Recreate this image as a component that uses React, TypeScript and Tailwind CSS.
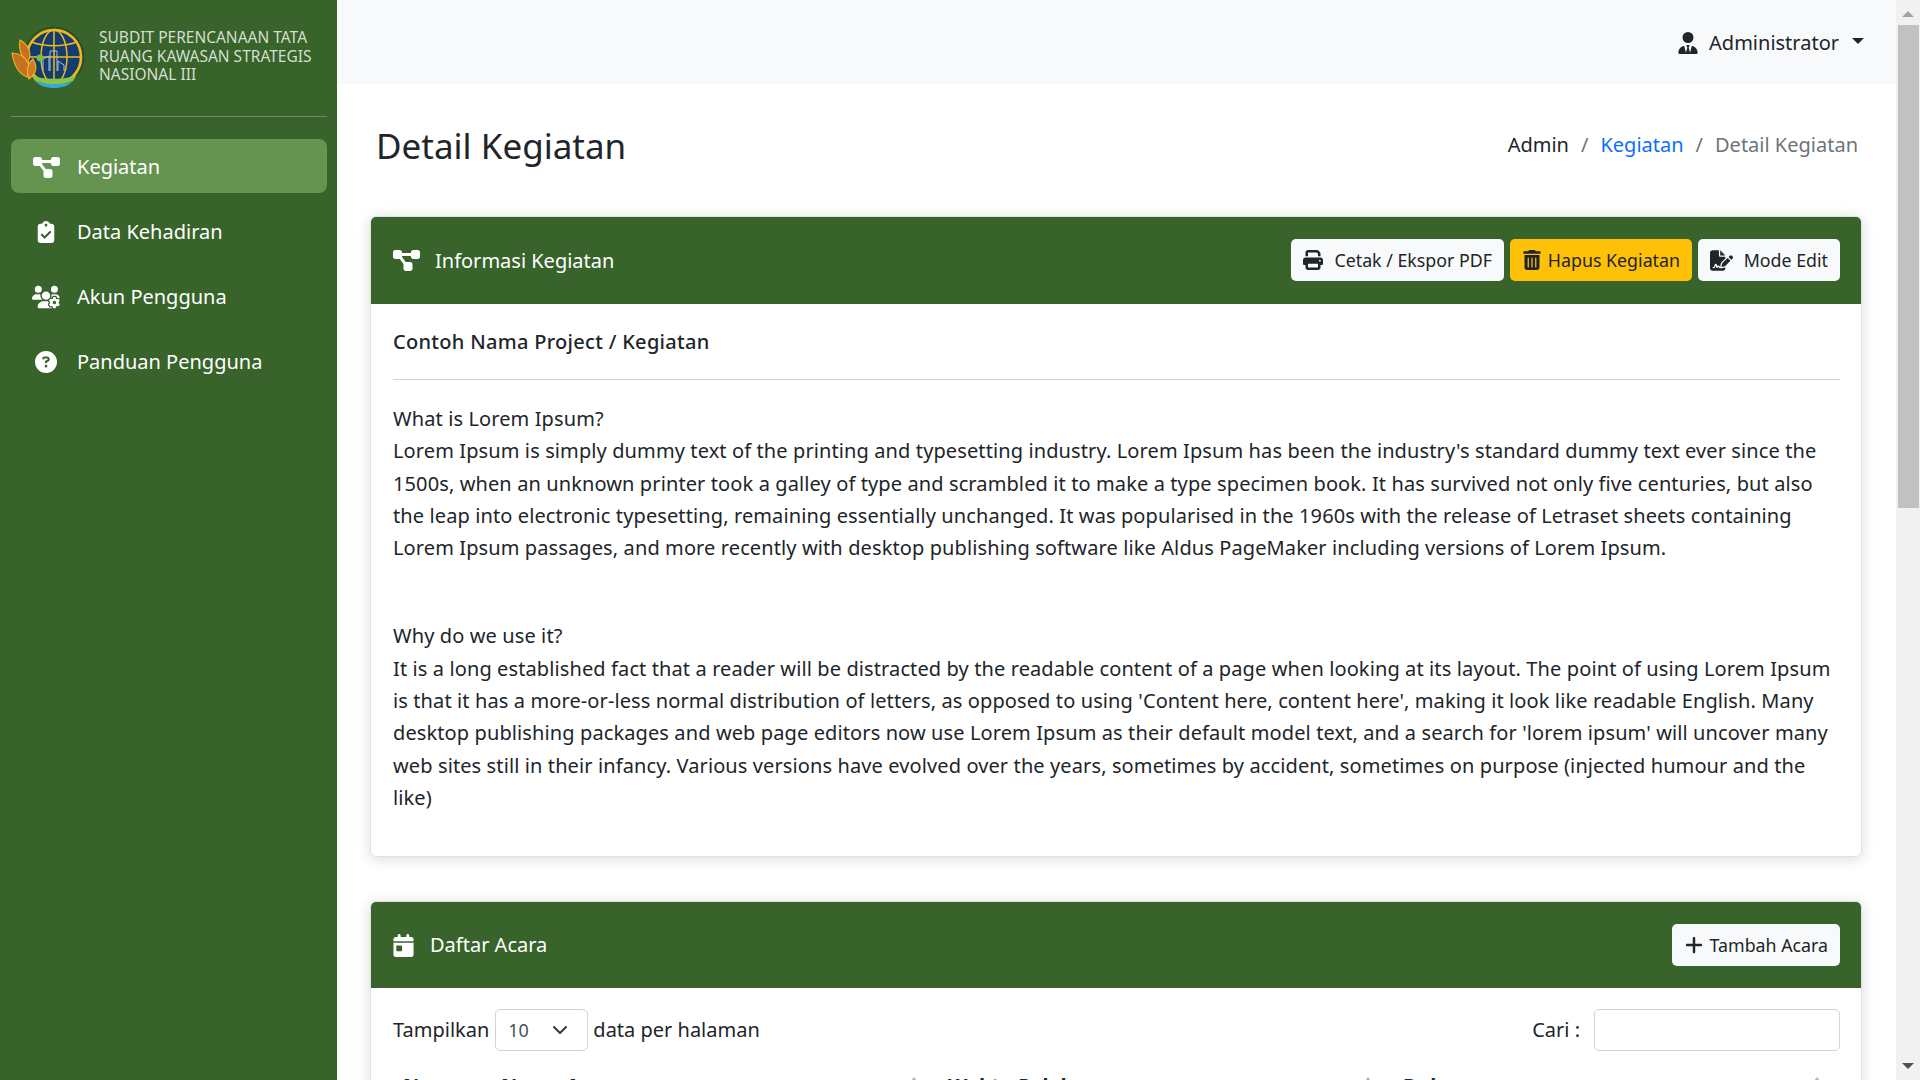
import React from 'react'
import {
  FaDiagramProject,
  FaClipboardCheck,
  FaUsersGear,
  FaCircleQuestion,
  FaUserTie,
  FaPrint,
  FaTrashCan,
  FaFileSignature,
  FaCalendarDay,
  FaPlus,
} from 'react-icons/fa6'

const menu = [
  { label: 'Kegiatan', icon: FaDiagramProject, size: 'text-[27px]', active: true },
  { label: 'Data Kehadiran', icon: FaClipboardCheck, size: 'text-[22px]' },
  { label: 'Akun Pengguna', icon: FaUsersGear, size: 'text-[28px]' },
  { label: 'Panduan Pengguna', icon: FaCircleQuestion, size: 'text-[22px]' },
]

const Logo = () => (
  <svg viewBox="0 0 74 70" className="w-[74px] h-[70px] shrink-0 -mt-[2px]">
    <circle cx="43" cy="35" r="29.5" fill="none" stroke="#1d3a22" strokeWidth="1.6" strokeDasharray="1.2 1" />
    <circle cx="43" cy="35" r="27" fill="#123d6e" stroke="#f2b61f" strokeWidth="2.6" />
    <g fill="none" stroke="#f2b61f" strokeWidth="1.5">
      <ellipse cx="43" cy="35" rx="13" ry="27" />
      <path d="M43 8v54M20 20c14 5 32 5 46 0M16 35h54" />
    </g>
    <g fill="none" stroke="#a9c2d2" strokeWidth="1">
      <path d="M32 49V37l6-3v15M39 49V29h7v20M47 49V39l6 4v6" />
    </g>
    <circle cx="29" cy="36" r="3.4" fill="#6fbf4a" />
    <g transform="translate(0 3)">
      <path d="M20 50c10 5 36 5 46 0l-4 6c-10 4-28 4-38 0z" fill="#8cc63f" />
      <path d="M24 56c10 4 28 4 38 0-5 5-11 7-19 7s-14-2-19-7z" fill="#35a7d8" />
    </g>
    <path d="M9 18c6 3 10 9 10 15 0 3-1 5-3 7-5-5-9-12-7-22z" fill="#c8701f" stroke="#f2b61f" strokeWidth="1.1" />
    <path d="M1 31c7 0 13 4 16 10 2 4 1 9-1 14-8-3-13-11-15-24z" fill="#c8701f" stroke="#f2b61f" strokeWidth="1.1" />
    <path d="M22 37c3 5 4 9 2 13-1 3-4 5-6 7-3-7-2-15 4-20z" fill="#d07a22" stroke="#f2b61f" strokeWidth="1.1" />
  </svg>
)

const Paragraphs = () => (
  <div className="text-[20px] leading-[32.3px] tracking-[0.11px] text-[#212529]">
    <p>What is Lorem Ipsum?</p>
    <p>
      Lorem Ipsum is simply dummy text of the printing and typesetting industry. Lorem Ipsum has been the
      industry's standard dummy text ever since the 1500s, when an unknown printer took a galley of type and
      scrambled it to make a type specimen book. It has survived not only five centuries, but also the leap into
      electronic typesetting, remaining essentially unchanged. It was popularised in the 1960s with the release of
      Letraset sheets containing Lorem Ipsum passages, and more recently with desktop publishing software like
      Aldus PageMaker including versions of Lorem Ipsum.
    </p>
    <p className="mt-[56px]">Why do we use it?</p>
    <p>
      It is a long established fact that a reader will be distracted by the readable content of a page when looking
      at its layout. The point of using Lorem Ipsum is that it has a more-or-less normal distribution of letters, as
      opposed to using 'Content here, content here', making it look like readable English. Many desktop publishing
      packages and web page editors now use Lorem Ipsum as their default model text, and a search for 'lorem
      ipsum' will uncover many web sites still in their infancy. Various versions have evolved over the years,
      sometimes by accident, sometimes on purpose (injected humour and the like)
    </p>
  </div>
)

const SortTip = () => (
  <span className="w-0 h-0 mt-[6px] border-x-[3px] border-x-transparent border-b-[4px] border-b-[#b5b5b5]" />
)

const App: React.FC = () => {
  return (
    <div className="h-screen flex overflow-hidden bg-white font-['Noto_Sans',sans-serif] text-[#212529]">
      <aside className="w-[337px] shrink-0 bg-[#38632a] px-[11px] pr-[10px]">
        <div className="h-[117px] flex items-center gap-[14px] border-b border-[#6c8c60]">
          <Logo />
          <div className="text-[15.5px] leading-[18.4px] text-[#d5dfd1] -mt-[4px]">
            SUBDIT PERENCANAAN TATA
            <br />
            RUANG KAWASAN STRATEGIS
            <br />
            NASIONAL III
          </div>
        </div>
        <nav className="mt-[22px] flex flex-col gap-[11px]">
          {menu.map((m) => (
            <a
              key={m.label}
              className={`h-[54px] flex items-center rounded-lg pl-[22px] pt-[2px] text-[20px] text-white ${m.active ? 'bg-[#64944f]' : ''}`}
            >
              <span className="w-[26px] mr-[18px] shrink-0 flex justify-center">
                <m.icon className={`${m.size} shrink-0`} />
              </span>
              {m.label}
            </a>
          ))}
        </nav>
      </aside>

      <main className="flex-1 min-w-0 flex flex-col">
        <header className="h-[84px] shrink-0 bg-[#f8f9fa] flex items-center justify-end pr-[32px] pt-[1px] text-[20px]">
          <FaUserTie className="text-[22px] mr-[10px]" />
          Administrator
          <span className="ml-[13px] mb-[3px] w-0 h-0 border-x-[6px] border-x-transparent border-t-[6px] border-t-[#212529]" />
        </header>

        <div className="pl-[33px] pr-[34px] pt-[40px]">
          <div className="flex items-center justify-between pl-[6px] pr-[4px] h-[44px] mb-[48px]">
            <h1 className="text-[35px]">Detail Kegiatan</h1>
            <div className="flex items-center gap-[12px] text-[20px] -mt-[3px]">
              <span>Admin</span>
              <span className="text-[#6c757d]">/</span>
              <span className="text-[#0d6efd]">Kegiatan</span>
              <span className="text-[#6c757d]">/</span>
              <span className="text-[#6c757d]">Detail Kegiatan</span>
            </div>
          </div>

          <section className="rounded-[6px] border border-[#dfe1e3] shadow-[0_2px_14px_rgba(0,0,0,0.15)] overflow-hidden">
            <div className="h-[87px] bg-[#38632a] flex items-center justify-between pl-[22px] pr-[21px] text-white text-[20px]">
              <div className="flex items-center gap-[15px]">
                <FaDiagramProject className="text-[27px]" />
                Informasi Kegiatan
              </div>
              <div className="flex items-center gap-[6px] -mt-[1px] text-[17.8px] text-[#212529]">
                <button className="w-[213px] h-[42px] px-[12px] flex items-center justify-between rounded-[5px] bg-[#f8f9fa]">
                  <FaPrint className="text-[20px]" />
                  Cetak / Ekspor PDF
                </button>
                <button className="w-[182px] h-[42px] px-[12px] flex items-center justify-between rounded-[5px] bg-[#ffc107]">
                  <FaTrashCan className="text-[20px]" />
                  Hapus Kegiatan
                </button>
                <button className="w-[142px] h-[42px] px-[12px] flex items-center justify-between rounded-[5px] bg-[#f8f9fa]">
                  <FaFileSignature className="text-[23px]" />
                  Mode Edit
                </button>
              </div>
            </div>
            <div className="pl-[22px] pr-[21px] pt-[20px] pb-[42px]">
              <h2 className="text-[20px] font-medium tracking-[0.3px] leading-[36px] pb-[19px] border-b border-[#cfd1d3] mb-[23px]">
                Contoh Nama Project / Kegiatan
              </h2>
              <Paragraphs />
            </div>
          </section>

          <section className="mt-[44px] rounded-[6px] border border-[#dfe1e3] shadow-[0_2px_14px_rgba(0,0,0,0.15)] overflow-hidden">
            <div className="h-[86px] bg-[#38632a] flex items-center justify-between pl-[22px] pr-[21px] text-white text-[20px]">
              <div className="flex items-center gap-[15px]">
                <FaCalendarDay className="text-[23px] -ml-[1px]" />
                Daftar Acara
              </div>
              <button className="w-[168px] h-[42px] px-[12px] flex items-center justify-between rounded-[5px] bg-[#f8f9fa] text-[17.8px] text-[#212529]">
                <FaPlus className="text-[20px]" />
                Tambah Acara
              </button>
            </div>
            <div className="pl-[22px] pr-[21px] pt-[21px] pb-[60px] text-[20px]">
              <div className="flex items-center justify-between h-[42px]">
                <div className="flex items-center gap-[5px]">
                  Tampilkan
                  <div className="w-[93px] h-[42px] ml-[1px] border border-[#ced4da] rounded-[5px] flex items-center justify-between pl-[12px] pr-[19px] text-[18px] text-[#495057]">
                    10
                    <svg viewBox="0 0 16 16" className="w-[16px] h-[16px]" fill="none" stroke="#343a40" strokeWidth="2" strokeLinecap="round" strokeLinejoin="round">
                      <path d="M2 5l6 6 6-6" />
                    </svg>
                  </div>
                  data per halaman
                </div>
                <div className="flex items-center gap-[14px]">
                  Cari :
                  <div className="w-[246px] h-[42px] border border-[#ced4da] rounded-[5px]" />
                </div>
              </div>
              <div className="mt-[20px] flex font-bold text-[20px]">
                <span className="w-[97px] pl-[10px]">No</span>
                <span className="w-[447px] pl-[11px] pr-[20px] flex justify-between">
                  Nama Acara
                  <SortTip />
                </span>
                <span className="w-[455px] pl-[11px] pr-[21px] flex justify-between">
                  Waktu Pelaksanaan
                  <SortTip />
                </span>
                <span className="flex-1 pl-[11px] pr-[20px] flex justify-between">
                  Dokumen
                  <SortTip />
                </span>
              </div>
            </div>
          </section>
        </div>
      </main>

      <div className="w-[24px] shrink-0 bg-[#f1f1f1] flex flex-col items-center">
        <span className="mt-[11px] w-0 h-0 border-x-[6px] border-x-transparent border-b-[6px] border-b-[#a3a3a3]" />
        <div className="mt-[8px] w-[21px] h-[483px] bg-[#c1c1c1]" />
        <span className="mt-auto mb-[11px] w-0 h-0 border-x-[6px] border-x-transparent border-t-[6px] border-t-[#505050]" />
      </div>
    </div>
  )
}

export default App
